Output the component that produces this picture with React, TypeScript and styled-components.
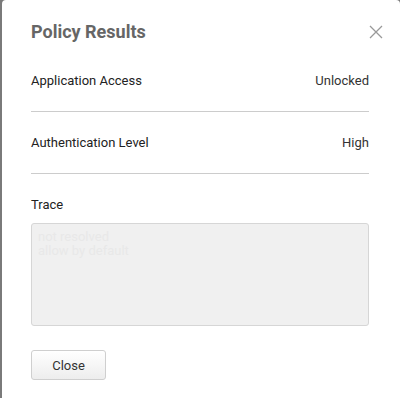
import React from "react";
import styled, { createGlobalStyle } from "styled-components";

const GlobalStyle = createGlobalStyle`
  html, body {
    margin: 0;
    padding: 0;
    background: #7a7a7a;
    font-family: Roboto, "Liberation Sans", Arial, sans-serif;
  }
`;

const Dialog = styled.div`
  box-sizing: border-box;
  width: 398px;
  height: 398px;
  margin-left: 2px;
  background: #ffffff;
  border-radius: 4px 4px 0 0;
  padding: 0 31px 0 29px;
  overflow: hidden;
`;

const Header = styled.div`
  display: flex;
  align-items: flex-start;
  justify-content: space-between;
  padding-top: 20px;
  height: 30px;
`;

const Title = styled.h2`
  margin: 0;
  font-size: 18px;
  line-height: 24px;
  font-weight: 700;
  color: #666666;
`;

const CloseIcon = styled.button`
  display: flex;
  margin: 5px -14px 0 0;
  padding: 0;
  border: none;
  background: none;
  cursor: pointer;
`;

const Row = styled.div`
  display: flex;
  justify-content: space-between;
  padding: 23px 0 22px;
  border-bottom: 1px solid #cccccc;
  font-size: 13px;
  line-height: 16px;
  color: #222222;
`;

const Value = styled.span`
  color: #333333;
`;

const Section = styled.div`
  padding-top: 23px;
  display: flex;
  flex-direction: column;
  gap: 10px;
`;

const Label = styled.div`
  font-size: 13px;
  line-height: 16px;
  color: #222222;
`;

const Trace = styled.textarea`
  box-sizing: border-box;
  width: 338px;
  height: 103px;
  margin: 0;
  padding: 6px 6px;
  resize: none;
  background: #f0f0f0;
  border: 1px solid #d6d6d6;
  border-radius: 3px;
  font-family: Roboto, "Liberation Sans", Arial, sans-serif;
  font-size: 13px;
  line-height: 14px;
  color: #e8e8e8;
  outline: none;
`;

const Footer = styled.div`
  padding-top: 24px;
`;

const Button = styled.button`
  box-sizing: border-box;
  width: 75px;
  height: 30px;
  border: 1px solid #cfcfcf;
  border-radius: 3px;
  background: linear-gradient(#ffffff, #ededed);
  font-family: Roboto, "Liberation Sans", Arial, sans-serif;
  font-size: 13px;
  color: #333333;
  cursor: pointer;
`;

const App = () => (
  <>
    <GlobalStyle />
    <Dialog>
      <Header>
        <Title>Policy Results</Title>
        <CloseIcon aria-label="Close">
          <svg width="14" height="14" viewBox="0 0 14 14">
            <path d="M1 1 L13 13 M13 1 L1 13" stroke="#999999" strokeWidth="1.3" fill="none" />
          </svg>
        </CloseIcon>
      </Header>
      <Row>
        <span>Application Access</span>
        <Value>Unlocked</Value>
      </Row>
      <Row>
        <span>Authentication Level</span>
        <Value>High</Value>
      </Row>
      <Section>
        <Label>Trace</Label>
        <Trace readOnly value={"not resolved\nallow by default"} />
      </Section>
      <Footer>
        <Button>Close</Button>
      </Footer>
    </Dialog>
  </>
);

export default App;
